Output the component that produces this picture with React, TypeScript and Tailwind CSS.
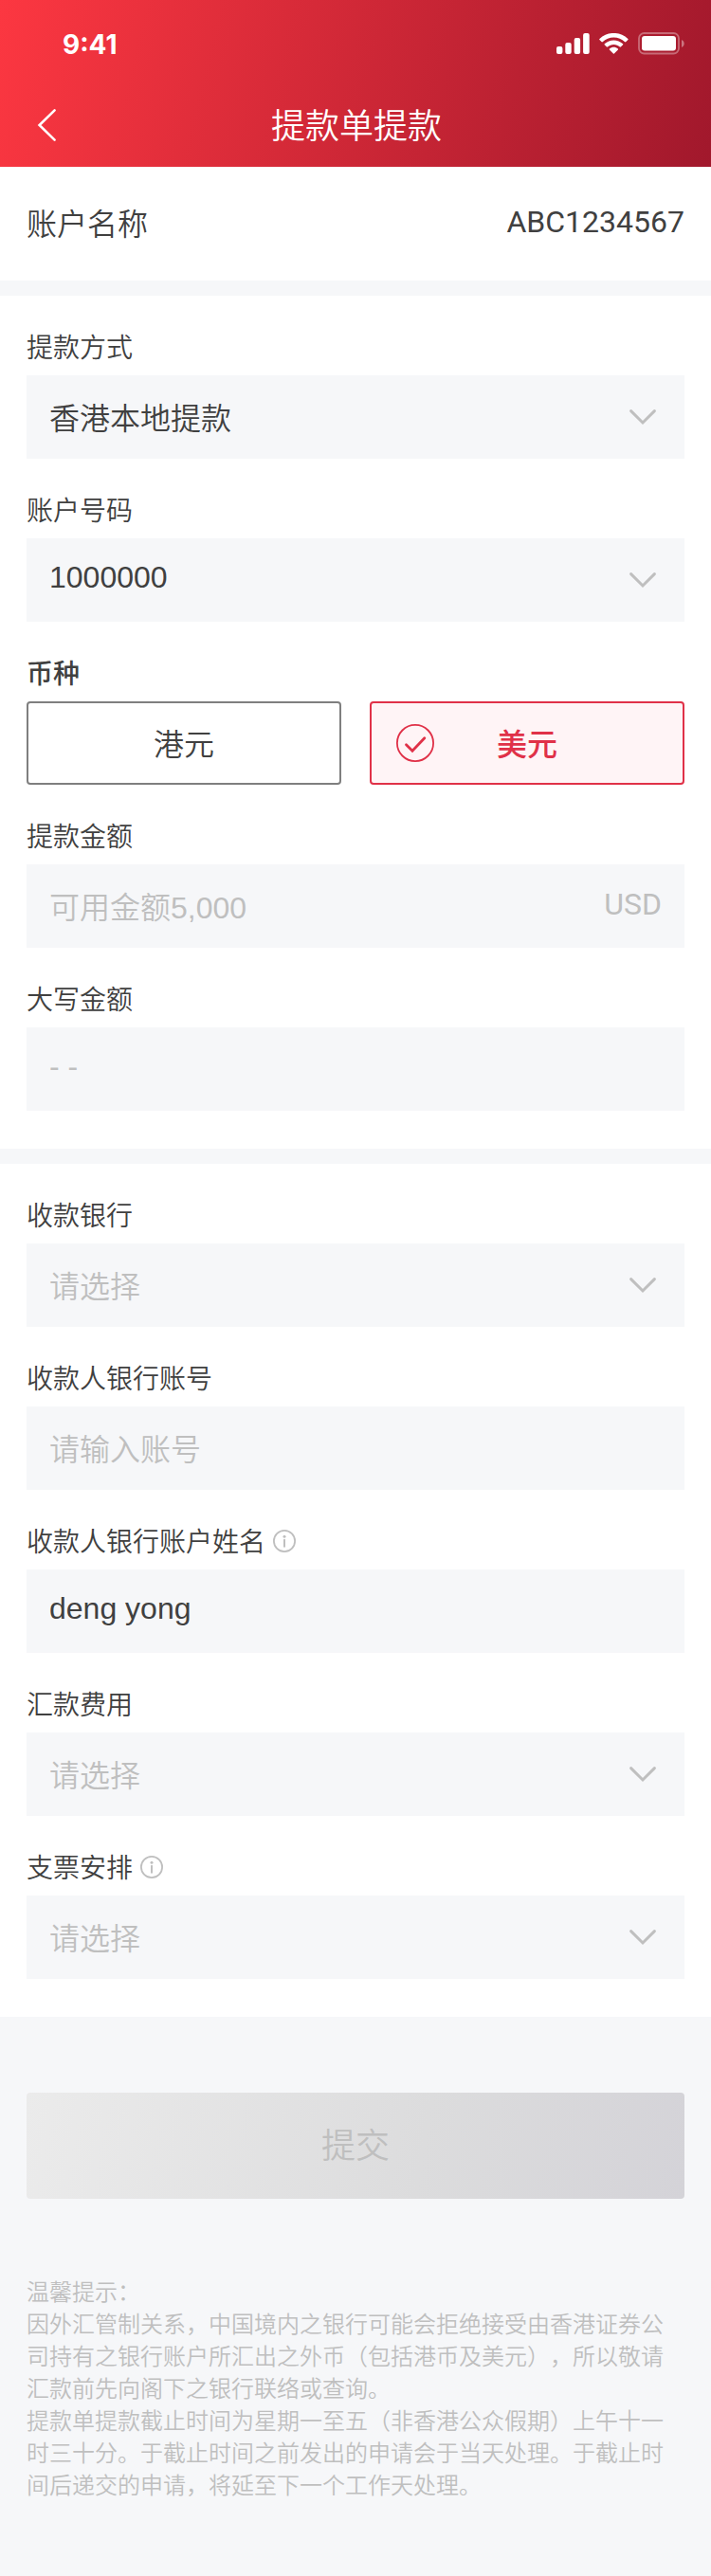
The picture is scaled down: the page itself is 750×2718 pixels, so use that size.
import { useState } from "react";
import type { ReactNode } from "react";

const fieldBase =
  "h-full w-full min-w-0 appearance-none bg-transparent px-6 text-[32px] outline-none placeholder:text-[#bfbfbf] placeholder:opacity-100";
const cjkField = `${fieldBase} pt-1`;
const latinField = `${fieldBase} pb-1.5`;

function StatusBar() {
  return (
    <div className="flex h-22 items-center justify-between pr-7 pl-16">
      <span className="pt-1.5 pl-0.5 font-['Inter'] text-[28px] leading-8 font-bold">9:41</span>
      <div className="flex items-center gap-2.5 pt-1">
        <svg width="35" height="22" viewBox="0 0 35 22" fill="currentColor" aria-hidden="true">
          <rect x="0" y="14" width="6.4" height="8" rx="2" />
          <rect x="9.3" y="10" width="6.4" height="12" rx="2" />
          <rect x="18.7" y="5" width="6.4" height="17" rx="2" />
          <rect x="28.1" y="0" width="6.6" height="22" rx="2" />
        </svg>
        <svg width="31" height="22" viewBox="0 0 31 22" fill="currentColor" aria-hidden="true">
          <path d="M15.4 4.6c4.4 0 8.6 1.7 11.8 4.7.2.2.6.2.9 0l2.3-2.3c.3-.3.3-.7 0-1C22-2.1 8.8-2.1.4 6c-.3.3-.3.7 0 1l2.3 2.3c.2.2.6.2.9 0 3.2-3 7.4-4.7 11.8-4.7z" />
          <path d="M15.4 12c2.4 0 4.7.9 6.5 2.5.2.2.6.2.9 0l2.3-2.3c.3-.3.3-.7 0-1-5.5-5.1-13.9-5.1-19.4 0-.3.3-.3.7 0 1l2.3 2.3c.3.2.7.2.9 0 1.800-1.600 4.100-2.500 6.500-2.500z" />
          <path d="M19.9 17.4c.3-.3.3-.7 0-1-2.6-2.2-6.4-2.2-9 0-.3.3-.3.7 0 1l4 4c.3.3.7.3 1 0z" />
        </svg>
        <svg width="49" height="24" viewBox="0 0 49 24" aria-hidden="true">
          <rect x="1" y="1" width="42" height="21.5" rx="5.5" fill="none" stroke="currentColor" strokeWidth="1.8" opacity="0.35" />
          <rect x="4" y="4" width="36" height="15.5" rx="3" fill="currentColor" />
          <path d="M46 8v8c1.6-.7 2.7-2.2 2.7-4S47.6 8.700 46 8z" fill="currentColor" opacity="0.4" />
        </svg>
      </div>
    </div>
  );
}

function InfoIcon() {
  return (
    <svg width="24" height="24" viewBox="0 0 24 24" fill="none" stroke="#bfbfbf" aria-hidden="true">
      <circle cx="12" cy="12" r="11.1" strokeWidth="1.8" />
      <circle cx="12" cy="7.2" r="1.5" fill="#bfbfbf" stroke="none" />
      <path d="M12 10.8v7" strokeWidth="2" strokeLinecap="round" />
    </svg>
  );
}

function Field({ id, label, info, children }: { id: string; label: string; info?: boolean; children: ReactNode }) {
  return (
    <div className="pt-9">
      <div className="flex h-10 items-center gap-2">
        <label htmlFor={id} className="text-[28px] leading-10">
          {label}
        </label>
        {info && (
          <button type="button" aria-label={`${label}说明`} className="pb-1">
            <InfoIcon />
          </button>
        )}
      </div>
      <div className="relative mt-2 flex h-22 items-center bg-[#f6f7f9]">{children}</div>
    </div>
  );
}

type SelectFieldProps = {
  id: string;
  label: string;
  options: string[];
  placeholder?: string;
  info?: boolean;
  latin?: boolean;
};

function SelectField({ id, label, options, placeholder, info, latin }: SelectFieldProps) {
  const [value, setValue] = useState(placeholder ? "" : options[0]);
  return (
    <Field id={id} label={label} info={info}>
      <select
        id={id}
        value={value}
        onChange={(e) => setValue(e.target.value)}
        className={`${latin ? latinField : cjkField} ${value === "" ? "text-[#bfbfbf]" : "text-[#404040]"}`}
      >
        {placeholder && (
          <option value="" disabled>
            {placeholder}
          </option>
        )}
        {options.map((o) => (
          <option key={o}>{o}</option>
        ))}
      </select>
      <svg className="pointer-events-none absolute right-7" width="32" height="32" viewBox="0 0 32 32" fill="none" stroke="#bfbfbf" strokeWidth="3" strokeLinecap="round" aria-hidden="true">
        <path d="M3.6 9.6L16 22L28.4 9.6" />
      </svg>
    </Field>
  );
}

function CurrencyOption({ label, checked, onSelect }: { label: string; checked: boolean; onSelect: () => void }) {
  return (
    <label
      className={`relative flex h-22 cursor-pointer items-center justify-center rounded-sm border-2 text-[32px] ${
        checked ? "border-[#e03148] bg-[#fff4f6] font-medium text-[#e03148]" : "border-[#7f7f7f] bg-white"
      }`}
    >
      <input type="radio" name="currency" className="sr-only" checked={checked} onChange={onSelect} />
      {checked && (
        <svg className="absolute left-[26px]" width="40" height="40" viewBox="0 0 40 40" fill="none" stroke="currentColor" aria-hidden="true">
          <circle cx="20" cy="20" r="19.1" strokeWidth="1.8" />
          <path d="M10.500 21.800L17 28.300L29.800 14.800" strokeWidth="2.8" strokeLinecap="round" />
        </svg>
      )}
      <span className="pt-1">{label}</span>
    </label>
  );
}

export default function App() {
  const [currency, setCurrency] = useState("美元");
  return (
    <div
      lang="zh-CN"
      className="min-h-screen bg-[#f6f7f9] font-['Liberation_Sans','Noto_Sans_CJK_SC',sans-serif] font-[350] text-[#404040] [text-spacing-trim:space-all]"
    >
      <header className="bg-linear-[104deg,#fc3741,#a1182c] text-white">
        <StatusBar />
        <div className="grid h-22 grid-cols-[98px_1fr_96px] items-center">
          <button type="button" aria-label="返回" className="pl-[34px]">
            <svg width="32" height="36" viewBox="0 0 32 36" fill="none" stroke="currentColor" strokeWidth="2.6" strokeLinecap="round">
              <path d="M23.6 2.4L7.6 18L23.6 33.6" />
            </svg>
          </button>
          <h1 className="pt-1 text-center text-[36px] leading-12">提款单提款</h1>
        </div>
      </header>

      <main>
        <div className="flex h-30 items-center justify-between bg-white px-7 text-[32px]">
          <span className="pt-0.5">账户名称</span>
          <span className="pb-1 font-['Roboto'] font-normal">ABC1234567</span>
        </div>

        <form onSubmit={(e) => e.preventDefault()}>
          <section className="mt-4 bg-white px-7 pb-10">
            <SelectField id="method" label="提款方式" options={["香港本地提款"]} />
            <SelectField id="account" label="账户号码" options={["1000000"]} latin />
            <fieldset className="pt-9">
              <legend className="float-left mb-2 w-full text-[28px] leading-10 font-medium">币种</legend>
              <div className="clear-both grid grid-cols-2 gap-[30px]">
                {["港元", "美元"].map((c) => (
                  <CurrencyOption key={c} label={c} checked={currency === c} onSelect={() => setCurrency(c)} />
                ))}
              </div>
            </fieldset>
            <Field id="amount" label="提款金额">
              <input id="amount" inputMode="decimal" placeholder="可用金额5,000" className={cjkField} />
              <span className="pr-6 pb-1 font-['Roboto'] text-[32px] font-normal text-[#bfbfbf]">USD</span>
            </Field>
            <Field id="words" label="大写金额">
              <input id="words" readOnly placeholder="- -" className={latinField} />
            </Field>
          </section>

          <section className="mt-4 bg-white px-7 pb-10">
            <SelectField id="bank" label="收款银行" placeholder="请选择" options={[]} />
            <Field id="payee-account" label="收款人银行账号">
              <input id="payee-account" placeholder="请输入账号" className={cjkField} />
            </Field>
            <Field id="payee-name" label="收款人银行账户姓名" info>
              <input id="payee-name" defaultValue="deng yong" className={latinField} />
            </Field>
            <SelectField id="fee" label="汇款费用" placeholder="请选择" options={[]} />
            <SelectField id="cheque" label="支票安排" placeholder="请选择" options={[]} info />
          </section>

          <div className="px-7 pt-20">
            <button type="submit" disabled className="h-28 w-full rounded-sm bg-linear-[100deg,#ebebeb,#dcdcdd_60%,#d4d3d8] pt-0.5 text-[36px] text-[#bfbfbf]">
              提交
            </button>
          </div>
        </form>

        <div className="px-7 pt-[82px] pb-[78px] text-[24px] leading-[34px] text-[#bfbfbf]">
          <p>温馨提示：</p>
          <p>因外汇管制关系，中国境内之银行可能会拒绝接受由香港证券公司持有之银行账户所汇出之外币（包括港币及美元），所以敬请汇款前先向阁下之银行联络或查询。</p>
          <p>提款单提款截止时间为星期一至五（非香港公众假期）上午十一时三十分。于截止时间之前发出的申请会于当天处理。于截止时间后递交的申请，将延至下一个工作天处理。</p>
        </div>
      </main>
    </div>
  );
}
